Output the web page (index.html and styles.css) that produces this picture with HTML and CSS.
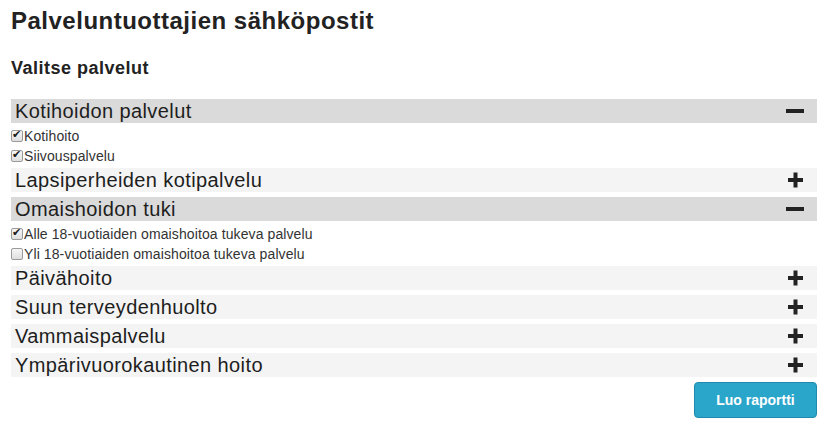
FILE: index.html
```html
<!DOCTYPE html>
<html lang="fi">
<head>
<meta charset="utf-8">
<title>Palveluntuottajien sähköpostit</title>
<link rel="stylesheet" href="styles.css">
</head>
<body>
<div class="page">
  <h1 class="title">Palveluntuottajien sähköpostit</h1>
  <h2 class="subtitle">Valitse palvelut</h2>

  <div class="group open">
    <div class="bar"><span class="bar-text">Kotihoidon palvelut</span><svg class="icon" width="18" height="18" viewBox="0 0 18 18"><rect x="0" y="7" width="18" height="4" fill="#222"/></svg></div>
    <ul class="items">
      <li class="item"><label><input type="checkbox" class="cb" checked>Kotihoito</label></li>
      <li class="item"><label><input type="checkbox" class="cb" checked>Siivouspalvelu</label></li>
    </ul>
  </div>

  <div class="group">
    <div class="bar"><span class="bar-text">Lapsiperheiden kotipalvelu</span><svg class="icon" width="18" height="18" viewBox="0 0 18 18"><rect x="2" y="7" width="15" height="4" fill="#222"/><rect x="7.5" y="1.5" width="4" height="15" fill="#222"/></svg></div>
  </div>

  <div class="group open">
    <div class="bar"><span class="bar-text">Omaishoidon tuki</span><svg class="icon" width="18" height="18" viewBox="0 0 18 18"><rect x="0" y="7" width="18" height="4" fill="#222"/></svg></div>
    <ul class="items">
      <li class="item"><label><input type="checkbox" class="cb" checked>Alle 18-vuotiaiden omaishoitoa tukeva palvelu</label></li>
      <li class="item"><label><input type="checkbox" class="cb">Yli 18-vuotiaiden omaishoitoa tukeva palvelu</label></li>
    </ul>
  </div>

  <div class="group">
    <div class="bar"><span class="bar-text">Päivähoito</span><svg class="icon" width="18" height="18" viewBox="0 0 18 18"><rect x="2" y="7" width="15" height="4" fill="#222"/><rect x="7.5" y="1.5" width="4" height="15" fill="#222"/></svg></div>
  </div>
  <div class="group">
    <div class="bar"><span class="bar-text">Suun terveydenhuolto</span><svg class="icon" width="18" height="18" viewBox="0 0 18 18"><rect x="2" y="7" width="15" height="4" fill="#222"/><rect x="7.5" y="1.5" width="4" height="15" fill="#222"/></svg></div>
  </div>
  <div class="group">
    <div class="bar"><span class="bar-text">Vammaispalvelu</span><svg class="icon" width="18" height="18" viewBox="0 0 18 18"><rect x="2" y="7" width="15" height="4" fill="#222"/><rect x="7.5" y="1.5" width="4" height="15" fill="#222"/></svg></div>
  </div>
  <div class="group">
    <div class="bar"><span class="bar-text">Ympärivuorokautinen hoito</span><svg class="icon" width="18" height="18" viewBox="0 0 18 18"><rect x="2" y="7" width="15" height="4" fill="#222"/><rect x="7.5" y="1.5" width="4" height="15" fill="#222"/></svg></div>
  </div>

  <div class="actions">
    <button class="btn" type="button">Luo raportti</button>
  </div>
</div>
</body>
</html>
```

FILE: styles.css
```css
html, body {
  margin: 0;
  padding: 0;
  background: #ffffff;
}

body {
  font-family: "Liberation Sans", Arial, sans-serif;
  color: #222222;
}

.page {
  width: 806px;
  padding: 7px 19px 0 11px;
}

.title {
  margin: 0 0 22px 0;
  font-size: 24px;
  line-height: 28px;
  font-weight: bold;
  letter-spacing: 0.5px;
  color: #222222;
}

.subtitle {
  margin: 0 0 20px 0;
  font-size: 18px;
  line-height: 22px;
  font-weight: bold;
  letter-spacing: 0.5px;
  color: #222222;
}

.group {
  display: flex;
  flex-direction: column;
}

.bar {
  height: 24px;
  margin-bottom: 5px;
  padding: 0 13px 0 4px;
  background: #f4f4f4;
  display: flex;
  align-items: center;
  justify-content: space-between;
}

.group.open .bar {
  background: #dadada;
}

.bar-text {
  font-size: 20px;
  line-height: 24px;
  letter-spacing: 0.4px;
  color: #1e1e1e;
}

.icon {
  display: block;
  flex: none;
}

.items {
  list-style: none;
  margin: -2px 0 2px 0;
  padding: 0;
}

.item {
  height: 20px;
  line-height: 20px;
  font-size: 14px;
  letter-spacing: 0.1px;
  color: #333333;
}

.item label {
  display: flex;
  align-items: center;
}

.cb {
  -webkit-appearance: none;
  appearance: none;
  flex: none;
  width: 12px;
  height: 12px;
  margin: 0 1px 0 0;
  border: 1px solid #9a9a9a;
  border-radius: 2px;
  background: linear-gradient(#f6f6f6, #dedede);
  position: relative;
  box-sizing: border-box;
}

.cb:checked::after {
  content: "\2714";
  position: absolute;
  left: 0px;
  top: -3px;
  font-family: "DejaVu Sans", sans-serif;
  font-size: 11px;
  line-height: 14px;
  color: #1a1a1a;
}

.actions {
  display: flex;
  justify-content: flex-end;
}

.btn {
  width: 123px;
  height: 36px;
  margin: 0;
  padding: 0;
  border: 1px solid #1f8aab;
  border-radius: 4px;
  background: #2ba6cb;
  color: #ffffff;
  font-family: "Liberation Sans", Arial, sans-serif;
  font-size: 14px;
  font-weight: bold;
  cursor: pointer;
}
```
